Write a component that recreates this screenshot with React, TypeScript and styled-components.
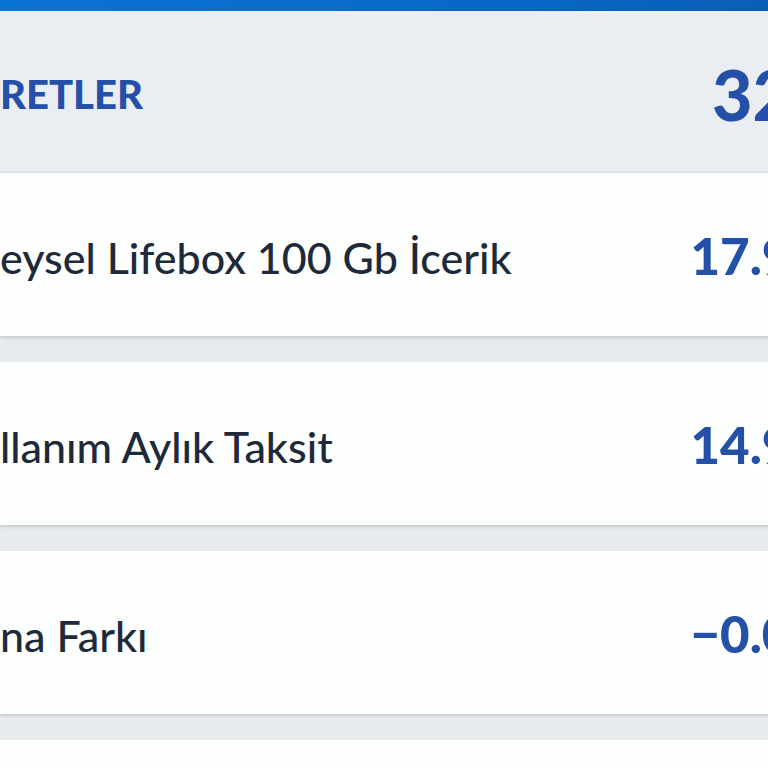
import styled, { createGlobalStyle } from "styled-components";

const GlobalStyle = createGlobalStyle`
    html, body {
        margin: 0;
        padding: 0;
        background: #e8ebee;
        overflow: hidden;
    }
    body {
        font-family: Lato, "Noto Sans", sans-serif;
    }
`;

const Page = styled.div`
    width: 768px;
    height: 768px;
    overflow: hidden;
    background: #e8ebee;
`;

// the sheet runs past the right edge so the amounts get clipped like the screenshot
const Sheet = styled.div`
    width: 900px;
    display: flex;
    flex-direction: column;
`;

const TopBar = styled.div`
    height: 11px;
    background: linear-gradient(90deg, #0a74d6 0%, #0967c6 55%, #0b5ab2 100%);
`;

const Header = styled.div`
    height: 160px;
    display: flex;
    align-items: center;
    justify-content: space-between;
    padding-right: 9px;
    background: #eaeef2;
    border-bottom: 2px solid #dfe3e7;
`;

const HeaderTitle = styled.h2`
    margin: 0;
    padding-top: 6px;
    font-size: 40px;
    font-weight: 900;
    color: #2450a8;
`;

const HeaderTotal = styled.span`
    padding-top: 6px;
    font-size: 70px;
    font-weight: 900;
    color: #2450a8;
    white-space: nowrap;
`;

const List = styled.div`
    display: flex;
    flex-direction: column;
    gap: 26px;
`;

const Card = styled.div`
    height: 163px;
    display: flex;
    align-items: center;
    justify-content: space-between;
    padding-right: 79px;
    background: #fdfefe;
    box-shadow: 0 2px 3px rgba(0, 0, 0, 0.14);
`;

const Label = styled.span`
    font-size: 43px;
    font-weight: 500;
    color: #1e2a3a;
    white-space: nowrap;
    padding-top: 6px;
`;

const Price = styled.span`
    font-size: 51px;
    font-weight: 900;
    color: #2450a8;
    white-space: nowrap;
    padding-top: 2px;
`;

const items = [
    { label: "eysel Lifebox 100 Gb İcerik", price: "17.99" },
    { label: "llanım Aylık Taksit", price: "14.99" },
    { label: "na Farkı", price: "−0.01" },
    { label: "", price: "" },
];

const App = () => {
    return (
        <Page>
            <GlobalStyle />
            <Sheet>
                <TopBar />
                <Header>
                    <HeaderTitle>RETLER</HeaderTitle>
                    <HeaderTotal>32.97</HeaderTotal>
                </Header>
                <List>
                    {items.map((item, i) => (
                        <Card key={i}>
                            <Label>{item.label}</Label>
                            <Price>{item.price}</Price>
                        </Card>
                    ))}
                </List>
            </Sheet>
        </Page>
    );
};

export default App;
